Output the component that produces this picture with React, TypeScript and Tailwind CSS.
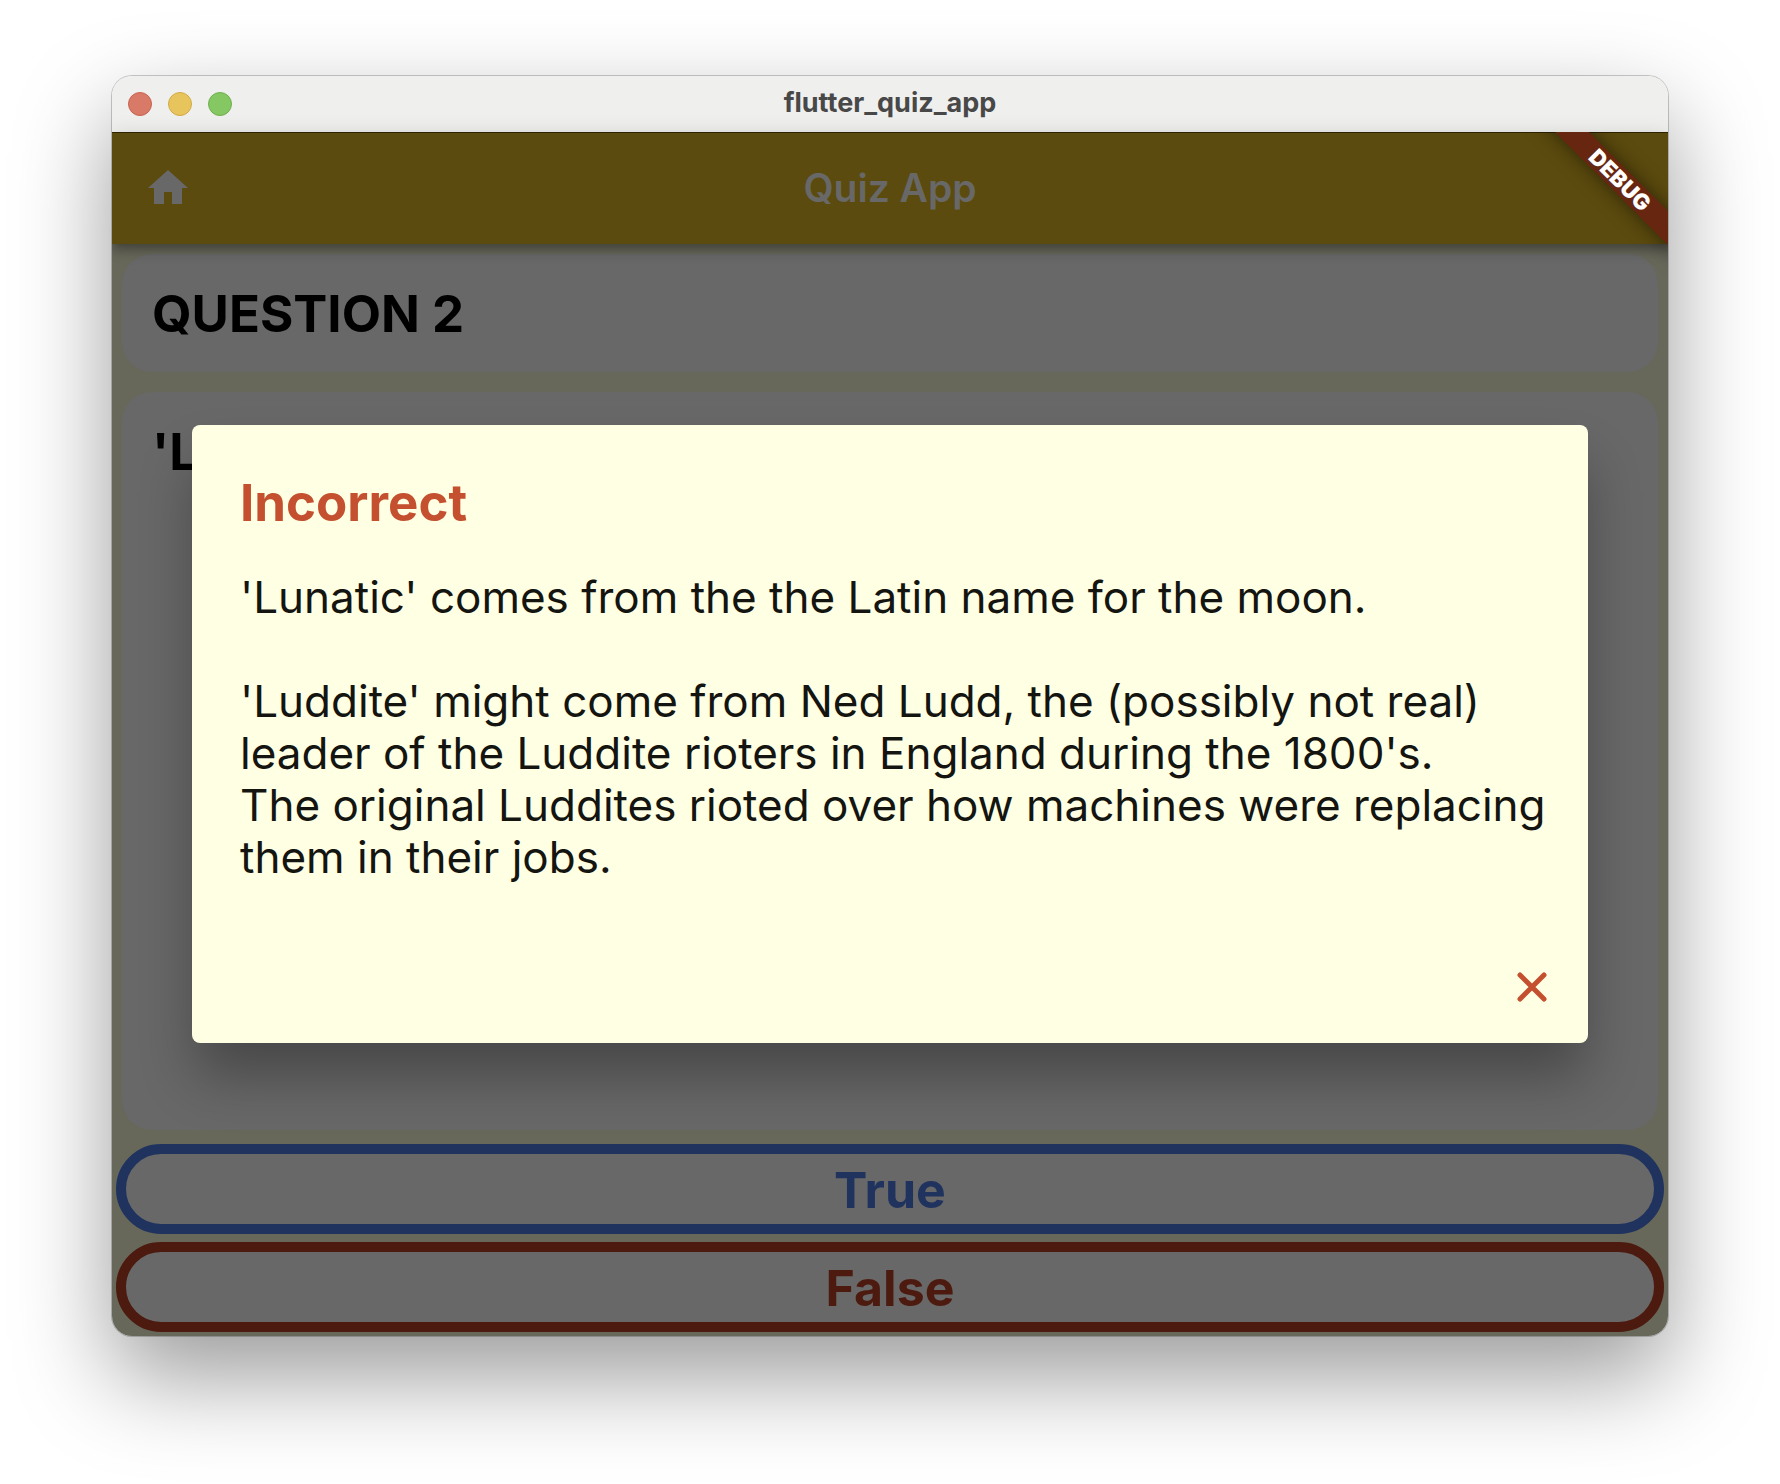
import React from "react";
import { MdHome } from "react-icons/md";

function TitleBar() {
  return (
    <header className="relative flex h-14 shrink-0 items-center justify-center bg-[#efefed]">
      <div className="absolute inset-y-0 left-4 flex items-center gap-4">
        <button aria-label="Close window" className="size-6 rounded-full border border-[#c9644f] bg-[#d87a67]" />
        <button aria-label="Minimize window" className="size-6 rounded-full border border-[#d3aa45] bg-[#e8c45c]" />
        <button aria-label="Zoom window" className="size-6 rounded-full border border-[#6fb04f] bg-[#84c763]" />
      </div>
      <h1 className="pb-0.5 text-[27px] leading-8 font-bold text-[#484848]">flutter_quiz_app</h1>
    </header>
  );
}

function DebugBanner() {
  return (
    <div className="absolute top-0 right-0 size-36 overflow-hidden">
      <div className="absolute top-9 -left-1 flex h-6 w-[200px] rotate-45 items-center justify-center bg-[#67260f] text-[22px] leading-6 font-black text-white shadow-[0_0_20px_rgba(0,0,0,0.5)]">
        DEBUG
      </div>
    </div>
  );
}

function AppBar() {
  return (
    <div className="relative z-10 flex h-28 shrink-0 items-center justify-center border-t border-[#2e2200] bg-[#5c4b0e] pb-0.5 shadow-[0_4px_8px_-2px_rgba(0,0,0,0.2),0_8px_10px_rgba(0,0,0,0.14),0_2px_20px_rgba(0,0,0,0.12)]">
      <button aria-label="Home" className="absolute left-8 text-[#686868]">
        <MdHome size={48} />
      </button>
      <h2 className="text-[39px] leading-12 font-semibold text-[#686868]">Quiz App</h2>
    </div>
  );
}

function CloseIcon() {
  return (
    <svg width="48" height="48" viewBox="0 0 48 48" fill="none" stroke="currentColor" strokeWidth="5" aria-hidden="true">
      <path d="M12 12 36 36M36 12 12 36" strokeLinecap="round" />
    </svg>
  );
}

function Answer({ label, className }: { label: string; className: string }) {
  return (
    <button
      className={`flex h-[90px] shrink-0 items-center justify-center rounded-full border-[10px] bg-[#686868] pt-0.5 text-[50px] leading-[60px] font-bold ${className}`}
    >
      {label}
    </button>
  );
}

function ResultDialog() {
  return (
    <div className="absolute inset-0 z-20 flex items-center justify-center px-20">
      <section
        role="dialog"
        aria-labelledby="result-title"
        className="flex w-full flex-col rounded-lg bg-[#ffffe3] shadow-[0_36px_56px_-4px_rgba(0,0,0,0.32)]"
      >
        <div className="flex flex-col gap-[38px] pt-12 pr-10 pb-20 pl-12">
          <h2 id="result-title" className="text-[51px] leading-[60px] font-bold text-[#c4502f]">
            Incorrect
          </h2>
          <div className="flex flex-col gap-[52px] text-[44px] leading-[52px] text-[#141410]">
            <p>'Lunatic' comes from the the Latin name for the moon.</p>
            <p>
              'Luddite' might come from Ned Ludd, the (possibly not real)
              <br />
              leader of the Luddite rioters in England during the 1800's.
              <br />
              The original Luddites rioted over how machines were replacing
              <br />
              them in their jobs.
            </p>
          </div>
        </div>
        <button aria-label="Close" className="mr-8 mb-8 self-end text-[#c4502f]">
          <CloseIcon />
        </button>
      </section>
    </div>
  );
}

export default function App() {
  return (
    <div className="flex min-h-screen flex-col bg-white px-28 pt-19 pb-37 font-['Inter',sans-serif]">
      <div className="flex flex-1 flex-col overflow-hidden rounded-[20px] shadow-[0_0_0_1px_rgba(0,0,0,0.2),0_40px_96px_rgba(0,0,0,0.4)]">
        <TitleBar />
        <div className="relative flex flex-1 flex-col bg-[#67675a]">
          <AppBar />
          <main className="flex flex-1 flex-col">
            <div className="m-2.5 rounded-[30px] bg-[#686868] px-[30px] pt-[30px] pb-7">
              <h2 className="text-[51px] leading-[60px] font-bold text-black">QUESTION 2</h2>
            </div>
            <div className="m-2.5 flex-1 rounded-[30px] bg-[#686868] px-[30px] pt-[30px] pb-7">
              <p className="text-[51px] leading-[60px] font-bold whitespace-nowrap text-black">'L</p>
            </div>
            <div className="flex flex-col gap-2 p-1">
              <Answer label="True" className="border-[#20335e] text-[#20335e]" />
              <Answer label="False" className="border-[#4c1a0f] text-[#4c1a0f]" />
            </div>
          </main>
          <ResultDialog />
          <div className="pointer-events-none absolute inset-x-0 top-0 z-30">
            <DebugBanner />
          </div>
        </div>
      </div>
    </div>
  );
}
